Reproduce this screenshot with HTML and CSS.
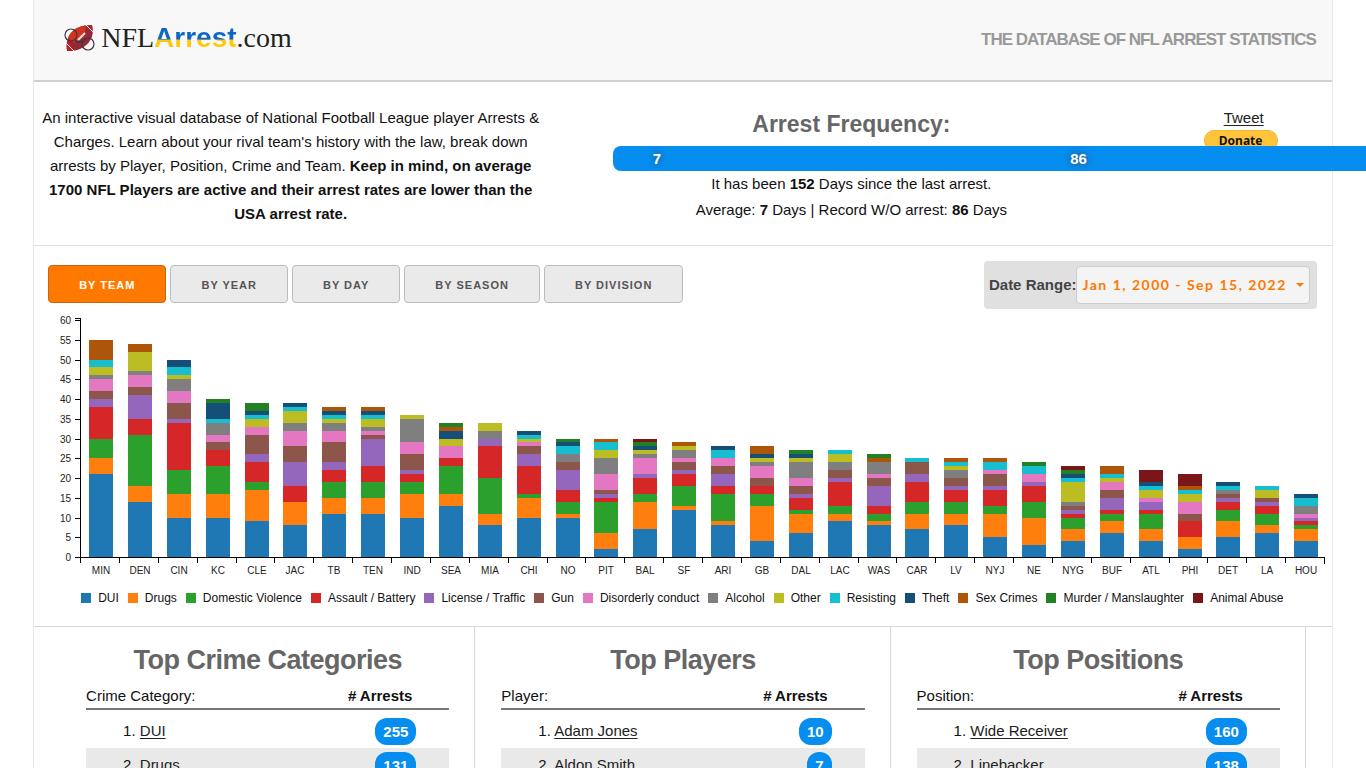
FILE: index.html
```html
<!DOCTYPE html>
<html lang="en">
<head>
<meta charset="utf-8">
<meta name="viewport" content="width=device-width, initial-scale=1">
<title>NFL Arrest</title>
<link rel="stylesheet" href="styles.css">
</head>
<body>
<div class="page">
  <header class="site-header">
    <a class="logo" href="#">
      <svg class="logo-icon" viewBox="0 0 32 28" aria-hidden="true">
        <path d="M3 27C0 13 10 0 28 1C32 14 22 28 3 27Z" fill="#b81f28"/>
        <path d="M9 25C5 15 12 4 22 2L28 8C27 18 19 25 9 26Z" fill="#8f2a38"/>
        <path d="M4 14C7 6 14 2 22 2L20 13L10 19Z" fill="#d3321f"/>
        <path d="M14 16L21 9" stroke="#f0dede" stroke-width="2"/>
        <path d="M22 1l8 8M2 19l8 8" stroke="#f4f4f4" stroke-width="1"/>
        <circle cx="7" cy="11" r="6" fill="none" stroke="#3b3648" stroke-width="1.2"/>
        <circle cx="24" cy="20" r="6" fill="none" stroke="#3b3648" stroke-width="1.2"/>
        <path d="M11 17l4 1 4-1" fill="none" stroke="#3b3648" stroke-width="1.4"/>
      </svg>
      <span class="logo-text">NFL<b class="logo-accent">Arrest</b>.com</span>
    </a>
    <p class="tagline">THE DATABASE OF NFL ARREST STATISTICS</p>
  </header>

  <section class="intro">
    <p class="intro-text">An interactive visual database of National Football League player Arrests &amp; Charges. Learn about your rival team's history with the law, break down arrests by Player, Position, Crime and Team. <b>Keep in mind, on average 1700 NFL Players are active and their arrest rates are lower than the USA arrest rate.</b></p>
    <div class="frequency">
      <h2 class="frequency-title">Arrest Frequency:</h2>
      <div class="meter">
        <div class="meter-part" style="width:18.4%"><span class="meter-value">7</span></div>
        <div class="meter-part" style="width:158.6%"><span class="meter-value">86</span></div>
      </div>
      <p class="frequency-line">It has been <b>152</b> Days since the last arrest.</p>
      <p class="frequency-line">Average: <b>7</b> Days | Record W/O arrest: <b>86</b> Days</p>
    </div>
    <div class="social">
      <a class="link tweet" href="#">Tweet</a>
      <button class="donate" type="button">Donate</button>
    </div>
  </section>

  <section class="chart-section">
    <div class="toolbar">
      <div class="tabs">
        <button class="tab tab-active" type="button">BY TEAM</button>
        <button class="tab" type="button">BY YEAR</button>
        <button class="tab" type="button">BY DAY</button>
        <button class="tab" type="button">BY SEASON</button>
        <button class="tab" type="button">BY DIVISION</button>
      </div>
      <div class="range">
        <label class="range-label" for="range">Date Range:</label>
        <button class="range-button" id="range" type="button">Jan 1, 2000 - Sep 15, 2022<span class="caret"></span></button>
      </div>
    </div>
    <svg class="chart" id="chart" role="img" aria-label="Arrests by team"></svg>
    <ul class="legend" id="legend"></ul>
  </section>

  <section class="tops">
    <div class="top">
      <h2 class="top-title">Top Crime Categories</h2>
      <table class="top-table">
        <thead><tr><th class="name-head">Crime Category:</th><th class="count-head"># Arrests</th></tr></thead>
        <tbody>
          <tr><td class="name">1. <a class="link" href="#">DUI</a></td><td class="count"><span class="pill">255</span></td></tr>
          <tr><td class="name">2. <a class="link" href="#">Drugs</a></td><td class="count"><span class="pill">131</span></td></tr>
        </tbody>
      </table>
    </div>
    <div class="top">
      <h2 class="top-title">Top Players</h2>
      <table class="top-table">
        <thead><tr><th class="name-head">Player:</th><th class="count-head"># Arrests</th></tr></thead>
        <tbody>
          <tr><td class="name">1. <a class="link" href="#">Adam Jones</a></td><td class="count"><span class="pill">10</span></td></tr>
          <tr><td class="name">2. <a class="link" href="#">Aldon Smith</a></td><td class="count"><span class="pill">7</span></td></tr>
        </tbody>
      </table>
    </div>
    <div class="top">
      <h2 class="top-title">Top Positions</h2>
      <table class="top-table">
        <thead><tr><th class="name-head">Position:</th><th class="count-head"># Arrests</th></tr></thead>
        <tbody>
          <tr><td class="name">1. <a class="link" href="#">Wide Receiver</a></td><td class="count"><span class="pill">160</span></td></tr>
          <tr><td class="name">2. <a class="link" href="#">Linebacker</a></td><td class="count"><span class="pill">138</span></td></tr>
        </tbody>
      </table>
    </div>
  </section>
</div>
<script src="chart.js"></script>
</body>
</html>
```
FILE: styles.css
```css
* { box-sizing: border-box; }
html { overflow-x: hidden; }
body {
  margin: 0;
  background: #fff;
  color: #111;
  font: 15px/24px "Liberation Sans", Arial, sans-serif;
}
p, h2, ul { margin: 0; padding: 0; }
button { font-family: inherit; cursor: pointer; }
.page {
  box-sizing: content-box;
  width: 95%;
  min-height: 100vh;
  margin: 0 auto;
  border: solid #e8e8e8;
  border-width: 0 1px;
}
.link { color: #222; text-decoration: underline; text-underline-offset: 2px; }

.site-header {
  display: flex;
  align-items: center;
  justify-content: space-between;
  height: 82px;
  padding: 0 16px 0 30px;
  background: #f8f8f8;
  border-bottom: 2px solid #d0d0d0;
}
.logo { display: flex; align-items: center; gap: 5px; margin-bottom: 4px; color: #222; text-decoration: none; }
.logo-icon { width: 32px; height: 28px; }
.logo-text { font: 28px/32px "Liberation Serif", "Times New Roman", serif; }
.logo-accent {
  font-family: "Liberation Sans", Arial, sans-serif;
  background: linear-gradient(#0b66c8 0, #0b66c8 56%, #ffc80a 57%, #ffc80a 100%);
  -webkit-background-clip: text;
  background-clip: text;
  color: transparent;
}
.tagline { color: #999; font-size: 17px; font-weight: bold; letter-spacing: -1px; }

.intro {
  display: grid;
  grid-template-columns: 40% 36.7% 1fr;
  column-gap: 60px;
  padding: 24px 0 19px;
  border-bottom: 1px solid #e0e0e0;
}
.intro-text { padding: 0 12px 0 6px; text-align: center; }
.frequency { text-align: center; }
.frequency-title { margin-bottom: 4px; color: #666; font-size: 23px; line-height: 36px; }
.meter { position: relative; z-index: 1; display: flex; }
.meter-part { flex: none; height: 25px; background: #058df0; color: #fff; font-weight: bold; line-height: 25px; }
.meter-part:first-child { border-radius: 8px 0 0 8px; }
.meter-value { text-shadow: 0 0 6px #444; }
.frequency-line { line-height: 26px; }
.social { display: flex; flex-direction: column; align-items: center; }
.tweet { padding-left: 6px; }
.donate {
  width: 74px;
  height: 21px;
  padding: 0;
  border: 1px solid #f5b53c;
  border-radius: 10px;
  background: #ffc439;
  color: #111;
  font: bold 12px/19px "Noto Sans", sans-serif;
}

.chart-section { padding: 15px 0 16px; border-bottom: 1px solid #d8d8d8; }
.toolbar { display: flex; align-items: center; justify-content: space-between; padding: 0 15px 0 14px; }
.tabs { display: flex; gap: 4px; margin-bottom: 2px; }
.tab {
  height: 38px;
  padding: 2px 30px 0;
  border: 1px solid #bbb;
  border-radius: 4px;
  background: #eaeaea;
  color: #555;
  font-size: 11px;
  font-weight: bold;
  letter-spacing: 1px;
}
.tab-active { background: #ff7800; border-color: #c86410; color: #fff; }
.range {
  display: flex;
  align-items: center;
  height: 48px;
  padding: 0 7px 0 5px;
  border-radius: 4px;
  background: #e0e0e0;
}
.range-label { color: #444; font-size: 15px; font-weight: bold; }
.range-button {
  display: flex;
  align-items: center;
  gap: 9px;
  height: 38px;
  padding: 0 5px;
  border: 1px solid #ccc;
  border-radius: 4px;
  background: #f4f4f4;
  color: #ff7800;
  font: bold 14px/20px Lato, sans-serif;
  letter-spacing: 1.5px;
}
.caret { border: solid transparent; border-width: 4px 4px 0; border-top-color: #ff7800; }

.chart { display: block; width: 100%; height: 277px; font-size: 10px; }
.axis { fill: none; stroke: #000; shape-rendering: crispEdges; }
.bars { shape-rendering: crispEdges; }
.tick-label { fill: #222; }
.legend {
  display: flex;
  flex-wrap: wrap;
  gap: 0 9px;
  padding-left: 47px;
  list-style: none;
  font-size: 12px;
}
.legend-item { display: flex; align-items: center; gap: 7px; }
.swatch { width: 10px; height: 10px; }

.tops { display: grid; grid-template-columns: repeat(3, 1fr); width: 96%; margin: 0 auto; }
.top { padding: 16px 25px 60px 26px; border-right: 1px solid #d8d8d8; }
.top-title { color: #666; font-size: 27px; line-height: 34px; letter-spacing: -0.5px; text-align: center; }
.top-table { width: 100%; margin-top: 7px; border-collapse: collapse; }
.top-table th { padding: 0; border-bottom: 2px solid #777; }
.name-head { font-weight: normal; text-align: left; }
.top-table .count-head { padding-right: 37px; text-align: right; }
.top-table td { height: 34px; padding: 0; }
.top-table tr:nth-child(even) td { background: #e9e9e9; }
.top-table tbody::before { content: ""; display: block; height: 4px; }
.top-table .name { padding-left: 37px; }
.top-table .count { padding-right: 33px; text-align: right; }
.pill {
  display: inline-block;
  padding: 0 8px;
  border-radius: 12px;
  background: #058df0;
  color: #fff;
  font-weight: bold;
  line-height: 27px;
}
```
FILE: chart.js
```js
const crimes = [
  ["DUI", "#1f77b4"], ["Drugs", "#ff7f0e"], ["Domestic Violence", "#2ca02c"],
  ["Assault / Battery", "#d62728"], ["License / Traffic", "#9467bd"], ["Gun", "#8c564b"],
  ["Disorderly conduct", "#e377c2"], ["Alcohol", "#7f7f7f"], ["Other", "#bcbd22"],
  ["Resisting", "#17becf"], ["Theft", "#154f78"], ["Sex Crimes", "#ad5609"],
  ["Murder / Manslaughter", "#238023"], ["Animal Abuse", "#7a1518"]
];

// Counts follow the order of the crimes list.
const teams = {
  MIN: [21,4,5,8,2,2,3,1,2,2,0,5],
  DEN: [14,4,13,4,6,2,3,1,5,0,0,2],
  CIN: [10,6,6,12,1,4,3,3,1,2,2],
  KC: [10,6,7,4,0,2,2,3,0,1,4,0,1],
  CLE: [9,8,2,5,2,5,2,0,2,1,1,0,2],
  JAC: [8,6,0,4,6,4,4,2,3,1,1],
  TB: [11,4,4,3,2,5,3,2,1,1,1,1],
  TEN: [11,4,4,4,7,1,1,1,2,1,1,1],
  IND: [10,6,3,2,1,4,3,6,1],
  SEA: [13,3,7,2,0,0,3,0,2,0,2,1,1],
  MIA: [8,3,9,8,2,0,0,2,2],
  CHI: [10,5,1,7,3,2,1,0,1,1,1],
  NO: [10,1,3,3,5,2,0,2,0,2,1,0,1],
  PIT: [2,4,8,1,1,1,4,4,2,2,0,1],
  BAL: [7,7,2,4,1,0,4,1,1,0,1,0,1,1],
  SF: [12,1,5,3,1,2,1,2,1,0,0,1],
  ARI: [8,1,7,2,3,2,2,0,0,2,1],
  GB: [4,9,3,2,0,2,3,1,1,0,1,2],
  DAL: [6,5,1,3,1,2,2,4,1,0,1,0,1],
  LAC: [9,2,2,6,1,2,0,2,2,1],
  WAS: [8,1,2,2,5,2,1,3,0,0,0,1,1],
  CAR: [7,4,3,5,2,3,0,0,0,1],
  LV: [8,3,3,3,1,2,0,2,1,1,0,1],
  NYJ: [5,6,2,4,1,3,1,0,0,2,0,1],
  NE: [3,7,4,4,1,0,2,0,0,2,0,0,1],
  NYG: [4,3,3,1,1,1,0,1,5,1,1,0,1,1],
  BUF: [6,3,2,1,3,2,2,0,1,1,0,2],
  ATL: [4,3,4,1,2,0,1,0,2,1,1,0,0,3],
  PHI: [2,3,0,4,0,2,3,0,2,1,0,1,0,3],
  DET: [5,4,3,2,1,1,0,1,0,1,1],
  LA: [6,2,3,2,1,1,0,0,2,1],
  HOU: [4,3,1,1,1,0,1,2,0,2,1]
};

const svg = document.getElementById("chart");

function add(parent, tag, attrs, text) {
  const el = document.createElementNS("http://www.w3.org/2000/svg", tag);
  for (const key in attrs) el.setAttribute(key, attrs[key]);
  if (text !== undefined) el.textContent = text;
  parent.appendChild(el);
  return el;
}

function draw() {
  svg.replaceChildren();
  const left = 46, right = svg.clientWidth - 8, base = 248, top = 9;
  const names = Object.keys(teams);
  const step = (right - left) / names.length;
  const y = v => Math.round(base - v * 237 / 60);
  const bars = add(svg, "g", { class: "bars" });
  let path = `M${left - 5} ${top}.5H${left}.5V${base}.5H${right}.5v6`;

  for (let v = 0; v <= 60; v += 5) {
    path += `M${left - 5} ${y(v)}.5H${left}`;
    add(svg, "text", { class: "tick-label", x: left - 9, y: y(v) + 4, "text-anchor": "end" }, v);
  }
  names.forEach((name, i) => {
    const x = Math.round(left + i * step);
    path += `M${x}.5 ${base}v6`;
    let sum = 0;
    teams[name].forEach((n, k) => {
      if (!n) return;
      add(bars, "rect", { x: x + 9, y: y(sum + n), width: 24, height: y(sum) - y(sum + n), fill: crimes[k][1] });
      sum += n;
    });
    add(svg, "text", { class: "tick-label", x: x + 21, y: base + 17, "text-anchor": "middle" }, name);
  });
  add(svg, "path", { class: "axis", d: path });
}

const legend = document.getElementById("legend");
crimes.forEach(([name, color]) => {
  const item = document.createElement("li");
  item.className = "legend-item";
  const swatch = document.createElement("span");
  swatch.className = "swatch";
  swatch.style.background = color;
  item.append(swatch, name);
  legend.append(item);
});

draw();
addEventListener("resize", draw);
```
